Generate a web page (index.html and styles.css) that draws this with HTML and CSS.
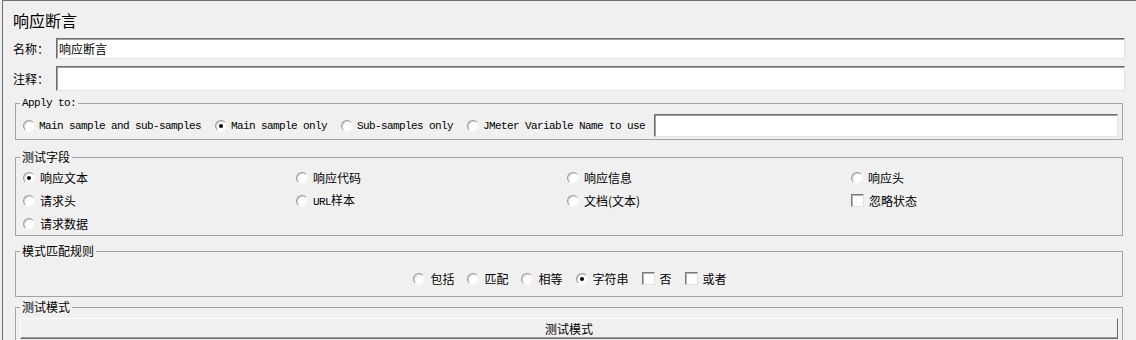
FILE: index.html
```html
<!DOCTYPE html>
<html lang="zh-CN">
<head>
    <meta charset="UTF-8">
    <title>响应断言</title>
    <link rel="stylesheet" href="styles.css">
</head>
<body>
    <div class="panel">
        <div class="title">响应断言</div>

        <div class="field-row row-name">
            <label class="field-label">名称：</label>
            <input class="text-input" type="text" value="响应断言">
        </div>
        <div class="field-row row-comment">
            <label class="field-label">注释：</label>
            <input class="text-input" type="text" value="">
        </div>

        <fieldset class="group group-apply">
            <legend class="mono">Apply to:</legend>
            <div class="apply-row mono">
                <label class="opt"><input type="radio" name="apply"><span>Main sample and sub-samples</span></label>
                <label class="opt"><input type="radio" name="apply" checked><span>Main sample only</span></label>
                <label class="opt"><input type="radio" name="apply"><span>Sub-samples only</span></label>
                <label class="opt"><input type="radio" name="apply"><span>JMeter Variable Name to use</span></label>
                <input class="text-input var-input" type="text">
            </div>
        </fieldset>

        <fieldset class="group group-field">
            <legend>测试字段</legend>
            <div class="field-grid">
                <label class="opt"><input type="radio" name="field" checked><span>响应文本</span></label>
                <label class="opt"><input type="radio" name="field"><span>响应代码</span></label>
                <label class="opt"><input type="radio" name="field"><span>响应信息</span></label>
                <label class="opt"><input type="radio" name="field"><span>响应头</span></label>
                <label class="opt"><input type="radio" name="field"><span>请求头</span></label>
                <label class="opt"><input type="radio" name="field"><span><span class="mono">URL</span>样本</span></label>
                <label class="opt"><input type="radio" name="field"><span>文档(文本)</span></label>
                <label class="opt"><input type="checkbox"><span>忽略状态</span></label>
                <label class="opt"><input type="radio" name="field"><span>请求数据</span></label>
            </div>
        </fieldset>

        <fieldset class="group group-rules">
            <legend>模式匹配规则</legend>
            <div class="rules-row">
                <label class="opt"><input type="radio" name="rule"><span>包括</span></label>
                <label class="opt"><input type="radio" name="rule"><span>匹配</span></label>
                <label class="opt"><input type="radio" name="rule"><span>相等</span></label>
                <label class="opt"><input type="radio" name="rule" checked><span>字符串</span></label>
                <label class="opt"><input type="checkbox"><span>否</span></label>
                <label class="opt"><input type="checkbox"><span>或者</span></label>
            </div>
        </fieldset>

        <fieldset class="group group-patterns">
            <legend>测试模式</legend>
            <button class="header-btn">测试模式</button>
        </fieldset>
    </div>
</body>
</html>
```

FILE: styles.css
```css
body {
    margin: 0;
    background: #f0f0f0;
    font-family: "Noto Sans CJK SC", sans-serif;
    font-size: 12px;
    line-height: 14px;
    color: #000;
}

.panel {
    margin-left: 2px;
    height: 339px;
    padding-top: 9px;
    border-top: 1px solid #6f6f6f;
    border-left: 1px solid #6f6f6f;
    overflow: hidden;
}

.mono {
    font-family: "Liberation Mono", monospace;
    font-size: 11px;
    letter-spacing: -0.6px;
}

.title {
    padding-left: 10px;
    font-size: 16px;
    line-height: 20px;
}

.field-row {
    display: flex;
    align-items: center;
    padding: 0 11px 0 10px;
}

.row-name {
    margin-top: 8px;
}

.row-comment {
    margin-top: 7px;
}

.field-label {
    width: 43px;
    flex: none;
}

.text-input {
    flex: 1;
    box-sizing: border-box;
    height: 21px;
    margin: 0;
    padding: 0 2px;
    background: #fff;
    border: 1px solid;
    border-color: #6d6d6d #e3e3e3 #e3e3e3 #6d6d6d;
    box-shadow: inset 1px 1px 0 #a0a0a0;
    font-family: "Noto Sans CJK SC", sans-serif;
    font-size: 12px;
    outline: none;
}

.row-comment .text-input {
    height: 25px;
}

/* titled borders */
.group {
    margin: 0 13px 0 12px;
    padding: 0 4px;
    border: 1px solid #a3a3a3;
    min-width: 0;
}

.group legend {
    padding: 0 2px;
    line-height: 14px;
}

.group-apply {
    margin-top: 5px;
    padding-top: 4px;
    padding-bottom: 2px;
}

.group-field {
    margin-top: 10px;
    padding-top: 2px;
    padding-bottom: 0;
}

.group-rules {
    margin-top: 8px;
    padding-top: 9px;
    padding-bottom: 6px;
}

.group-patterns {
    margin-top: 3px;
    padding-top: 4px;
    padding-bottom: 6px;
}

.opt {
    display: flex;
    align-items: center;
    gap: 5px;
    height: 23px;
}

.opt input {
    appearance: none;
    flex: none;
    width: 12px;
    height: 12px;
    margin: 0;
    background: #fff;
    border: 1px solid;
    border-color: #9a9a9a #f4f4f4 #f4f4f4 #9a9a9a;
    box-shadow: inset 1px 1px 0 #d6d6d6;
    position: relative;
}

.opt input[type="radio"] {
    border-radius: 50%;
}

.opt input[type="radio"]:checked::after {
    content: "";
    position: absolute;
    left: 3px;
    top: 3px;
    width: 4px;
    height: 4px;
    border-radius: 50%;
    background: #000;
}

.opt input[type="checkbox"] {
    width: 13px;
    height: 13px;
    border-color: #7a7a7a #e3e3e3 #e3e3e3 #7a7a7a;
    box-shadow: inset 1px 1px 0 #b4b4b4;
}

.apply-row {
    display: flex;
    align-items: center;
    gap: 14px;
    padding-left: 3px;
}

.apply-row .opt {
    gap: 4px;
}

.var-input {
    margin-left: -5px;
    height: 23px;
}

.field-grid {
    display: grid;
    grid-template-columns: 273px 271px 284px 1fr;
    padding-left: 3px;
}

.field-grid .opt {
    gap: 5px;
}

.rules-row {
    display: flex;
    justify-content: center;
    gap: 13px;
    padding-left: 2px;
}

.header-btn {
    display: block;
    width: 100%;
    height: 21px;
    margin: 0;
    padding: 0;
    background: #f0f0f0;
    border: 1px solid;
    border-color: #fff #696969 #696969 #fff;
    box-shadow: inset 0 -1px 0 #a0a0a0;
    font-family: "Noto Sans CJK SC", sans-serif;
    font-size: 12px;
    line-height: 14px;
    color: #000;
}
```
